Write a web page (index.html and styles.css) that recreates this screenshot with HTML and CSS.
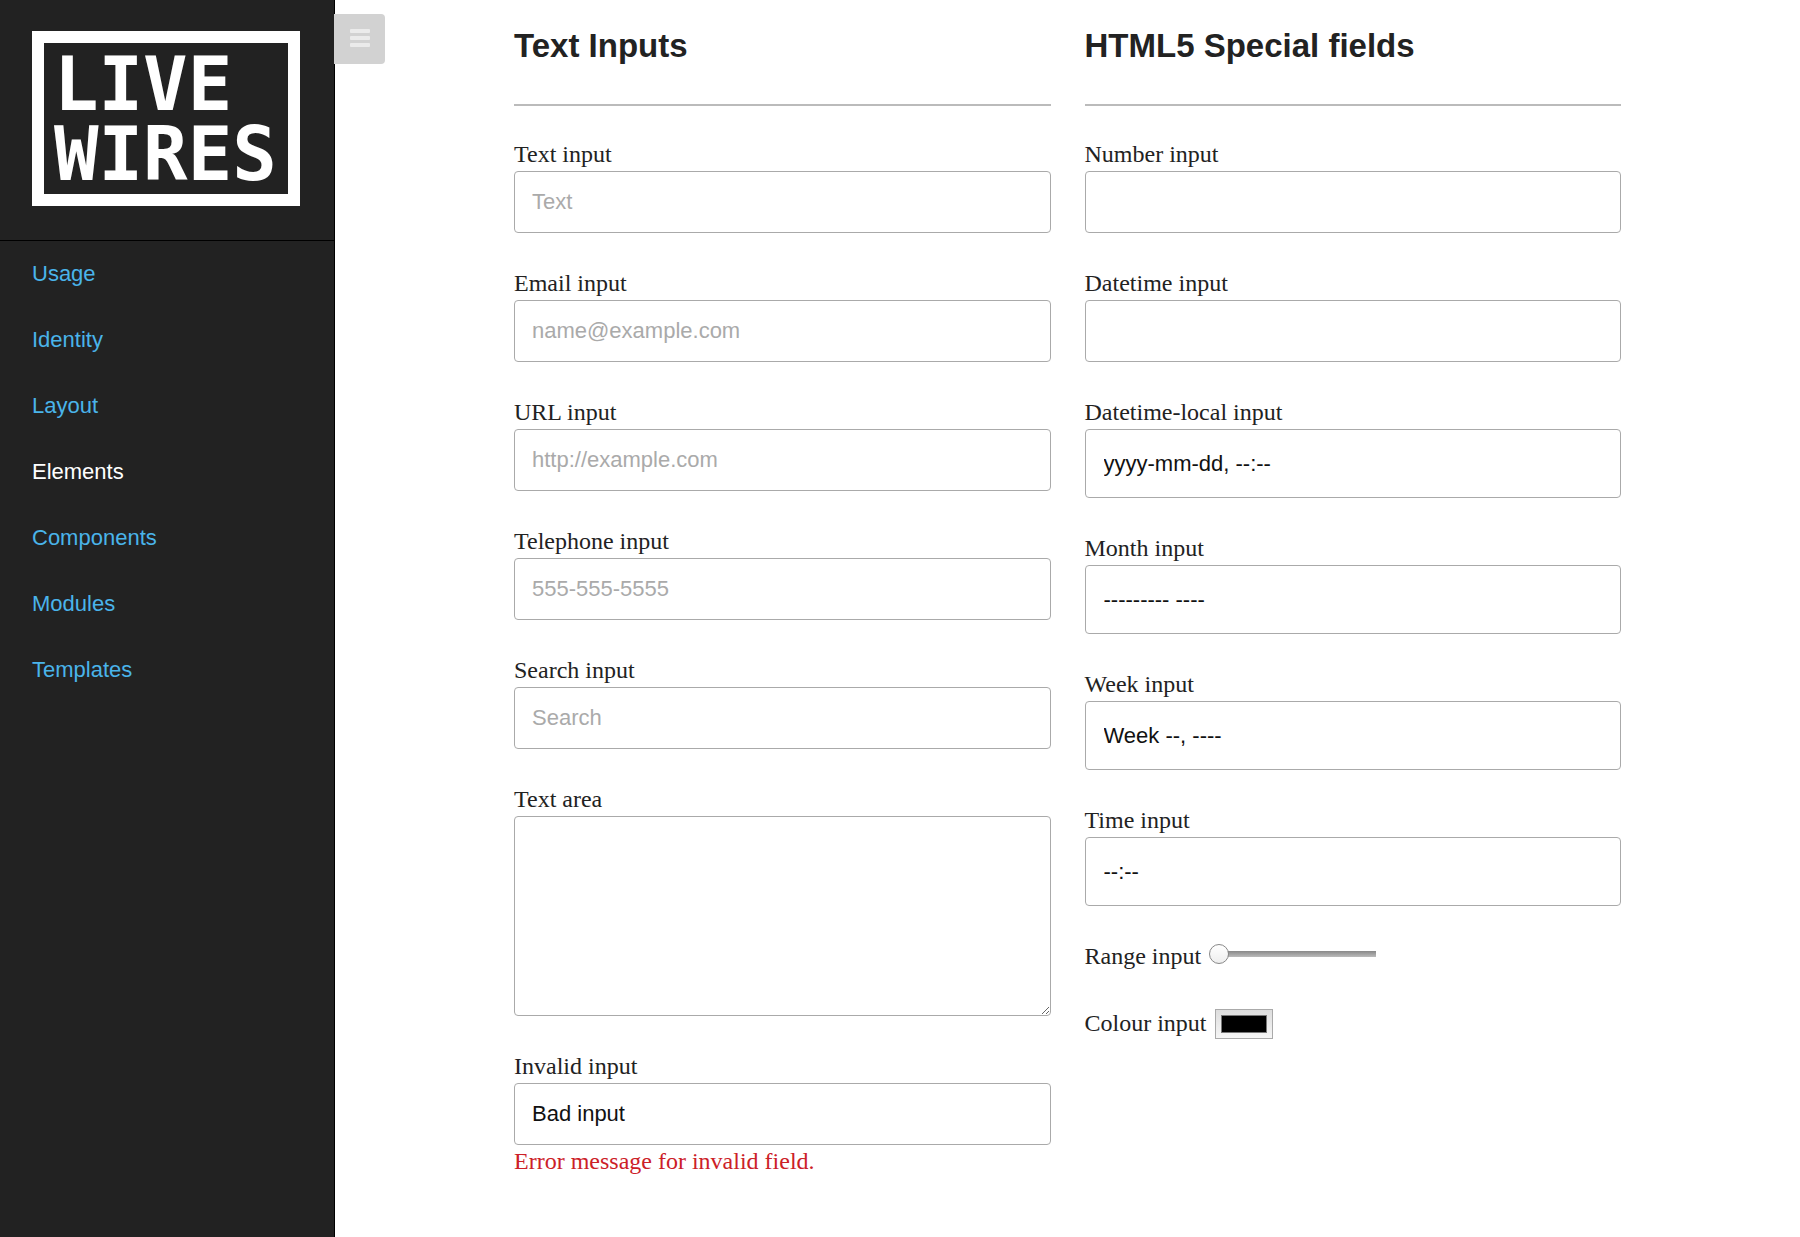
FILE: index.html
```html
<!DOCTYPE html>
<html lang="en">
<head>
<meta charset="utf-8">
<meta name="viewport" content="width=device-width, initial-scale=1">
<title>Live Wires – Elements</title>
<link rel="stylesheet" href="styles.css">
</head>
<body>
<div class="page">
  <aside class="sidebar">
    <header class="sidebar-header">
      <a class="logo" href="#"><span>LIVE</span><span>WIRES</span></a>
    </header>
    <nav class="nav">
      <a href="#">Usage</a>
      <a href="#">Identity</a>
      <a href="#">Layout</a>
      <a href="#" class="current" aria-current="page">Elements</a>
      <a href="#">Components</a>
      <a href="#">Modules</a>
      <a href="#">Templates</a>
    </nav>
    <button class="toggle" type="button" aria-label="Toggle menu">
      <svg width="20" height="18" viewBox="0 0 20 18" aria-hidden="true">
        <rect width="20" height="4" rx="1"/><rect y="7" width="20" height="4" rx="1"/><rect y="14" width="20" height="4" rx="1"/>
      </svg>
    </button>
  </aside>
  <main class="main">
    <form class="columns">
      <section>
        <h2>Text Inputs</h2>
        <div class="fields">
          <div class="field"><label for="text">Text input</label><input class="control" id="text" type="text" placeholder="Text"></div>
          <div class="field"><label for="email">Email input</label><input class="control" id="email" type="email" placeholder="name@example.com"></div>
          <div class="field"><label for="url">URL input</label><input class="control" id="url" type="url" placeholder="http://example.com"></div>
          <div class="field"><label for="tel">Telephone input</label><input class="control" id="tel" type="tel" placeholder="555-555-5555"></div>
          <div class="field"><label for="search">Search input</label><input class="control" id="search" type="search" placeholder="Search"></div>
          <div class="field"><label for="area">Text area</label><textarea class="control area" id="area"></textarea></div>
          <div class="field"><label for="invalid">Invalid input</label><input class="control" id="invalid" type="text" value="Bad input" aria-invalid="true" aria-describedby="invalid-error"><p class="error" id="invalid-error">Error message for invalid field.</p></div>
        </div>
      </section>
      <section>
        <h2>HTML5 Special fields</h2>
        <div class="fields">
          <div class="field"><label for="number">Number input</label><input class="control" id="number" type="number"></div>
          <div class="field"><label for="datetime">Datetime input</label><input class="control" id="datetime" type="text"></div>
          <div class="field"><label for="local">Datetime-local input</label><input class="control date" id="local" type="text" value="yyyy-mm-dd, --:--"></div>
          <div class="field"><label for="month">Month input</label><input class="control date" id="month" type="text" value="--------- ----"></div>
          <div class="field"><label for="week">Week input</label><input class="control date" id="week" type="text" value="Week --, ----"></div>
          <div class="field"><label for="time">Time input</label><input class="control date" id="time" type="text" value="--:--"></div>
          <div class="field inline"><label for="range">Range input</label><input class="range" id="range" type="range" value="0"></div>
          <div class="field inline"><label for="colour">Colour input</label><input class="colour" id="colour" type="color" value="#000000"></div>
        </div>
      </section>
    </form>
  </main>
</div>
</body>
</html>
```
FILE: styles.css
```css
* {
  box-sizing: border-box;
}

body {
  margin: 0;
  background: #fff;
  color: #222;
  font: 24px/33px "Liberation Serif", serif;
}

.page {
  display: flex;
  min-height: 100vh;
}

/* Sidebar */
.sidebar {
  position: relative;
  flex: 0 0 335px;
  min-width: 0;
  background: #222;
  border-right: 1px solid #000;
  font: 22px/33px "Liberation Sans", sans-serif;
}

.sidebar-header {
  padding: 31px 34px 34px 32px;
  border-bottom: 1px solid #000;
}

.logo {
  display: flex;
  flex-direction: column;
  height: 175px;
  padding: 6px 10px;
  border: 12px solid #fff;
  color: #fff;
  font: bold 74px/70px "DejaVu Sans Mono", monospace;
  text-decoration: none;
}

.nav a {
  display: block;
  padding: 16px 32px 17px;
  color: #4ab4ea;
  text-decoration: none;
}

.nav .current {
  color: #fff;
}

.toggle {
  position: absolute;
  top: 14px;
  left: 100%;
  display: grid;
  place-items: center;
  width: 51px;
  height: 50px;
  padding: 0 0 2px;
  border: 0;
  border-radius: 0 4px 4px 0;
  background: #d2d2d2;
  fill: #ebebeb;
}

/* Form columns */
.main {
  flex: 1;
  padding: 26px 34px;
}

.columns {
  display: grid;
  grid-template-columns: 1fr 1fr;
  gap: 34px;
  max-width: 1107px;
  margin: 0 auto;
}

h2 {
  margin: 0 0 32px;
  padding-bottom: 38px;
  border-bottom: 2px solid #bbb;
  font: bold 33px/40px "Liberation Sans", sans-serif;
}

.fields {
  display: flex;
  flex-direction: column;
  gap: 34px;
}

.field {
  display: flex;
  flex-direction: column;
}

.control {
  width: 100%;
  height: 62px;
  margin: 0;
  padding: 0 17px;
  border: 1px solid #aaa;
  border-radius: 4px;
  background: #fff;
  color: #111;
  font: 22px/33px "Liberation Sans", sans-serif;
  appearance: none;
}

.control::placeholder {
  color: #aaa;
  opacity: 1;
}

.area {
  height: 200px;
  resize: vertical;
}

.date {
  height: 69px;
  padding: 0 18px;
}

.error {
  margin: 0;
  color: #cc2027;
}

.inline {
  flex-direction: row;
  align-items: center;
  gap: 8px;
}

.range {
  width: 168px;
  height: 20px;
  margin: 0 0 6px;
  border-radius: 10px;
  background: linear-gradient(#888, #bbb) center / calc(100% - 2px) 6px no-repeat;
  appearance: none;
}

.range::-webkit-slider-thumb {
  width: 20px;
  height: 20px;
  border: 1px solid #888;
  border-radius: 50%;
  background: linear-gradient(#fff, #eee);
  appearance: none;
}

.colour {
  width: 58px;
  height: 30px;
  margin: 0;
  padding: 5px;
  border: 1px solid #aaa;
  background: linear-gradient(#ddd, #f6f6f6);
  appearance: none;
}

.colour::-webkit-color-swatch-wrapper {
  padding: 0;
}

.colour::-webkit-color-swatch {
  border: 1px solid #777;
}
```
